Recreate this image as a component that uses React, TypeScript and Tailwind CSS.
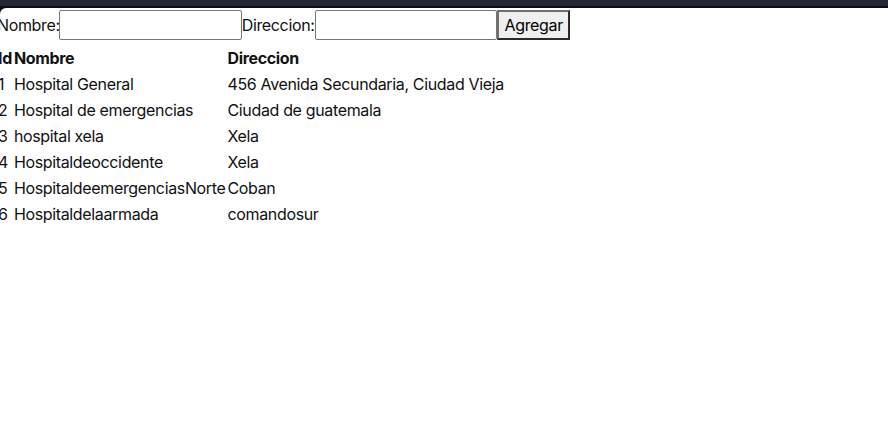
import React from "react";

const rows = [
  { id: 1, nombre: "Hospital General", direccion: "456 Avenida Secundaria, Ciudad Vieja" },
  { id: 2, nombre: "Hospital de emergencias", direccion: "Ciudad de guatemala" },
  { id: 3, nombre: "hospital xela", direccion: "Xela" },
  { id: 4, nombre: "Hospitaldeoccidente", direccion: "Xela" },
  { id: 5, nombre: "HospitaldeemergenciasNorte", direccion: "Coban" },
  { id: 6, nombre: "Hospitaldelaarmada", direccion: "comandosur" },
];

export default function App() {
  return (
    <div className="w-[888px] h-[434px] overflow-hidden bg-[#0b0e17]" style={{ fontFamily: "Inter, 'Liberation Sans', sans-serif" }}>
      <div className="h-[6px] bg-[#252834]" />
      <div className="mt-[2px] h-[426px] bg-white rounded-tl-[6px] text-[16px] tracking-[-0.35px] text-[#111] overflow-hidden">
        <div className="-ml-[3px] pt-[2px]">
          <div className="flex items-center h-[30px]">
            <span className="-mr-[1px]">Nombre:</span>
            <input className="w-[183px] h-[30px] border border-[#767676] rounded-[2px] bg-white" />
            <span>Direccion:</span>
            <input className="w-[182px] h-[30px] border border-[#767676] rounded-[2px] bg-white" />
            <button className="h-[30px] pl-[6px] pr-[5px] bg-[#efefef] border-2 border-t-[#6f6f6f] border-l-[#6f6f6f] border-r-[#2a2a2a] border-b-[#2a2a2a] text-black">
              Agregar
            </button>
          </div>
          <table className="mt-[5px]">
            <thead>
              <tr>
                <th className="p-[1px] text-left font-bold">Id</th>
                <th className="p-[1px] text-left font-bold">Nombre</th>
                <th className="p-[1px] text-left font-bold">Direccion</th>
              </tr>
            </thead>
            <tbody>
              {rows.map((r) => (
                <tr key={r.id}>
                  <td className="p-[1px]">{r.id}</td>
                  <td className="p-[1px]">{r.nombre}</td>
                  <td className="p-[1px]">{r.direccion}</td>
                </tr>
              ))}
            </tbody>
          </table>
        </div>
      </div>
    </div>
  );
}
